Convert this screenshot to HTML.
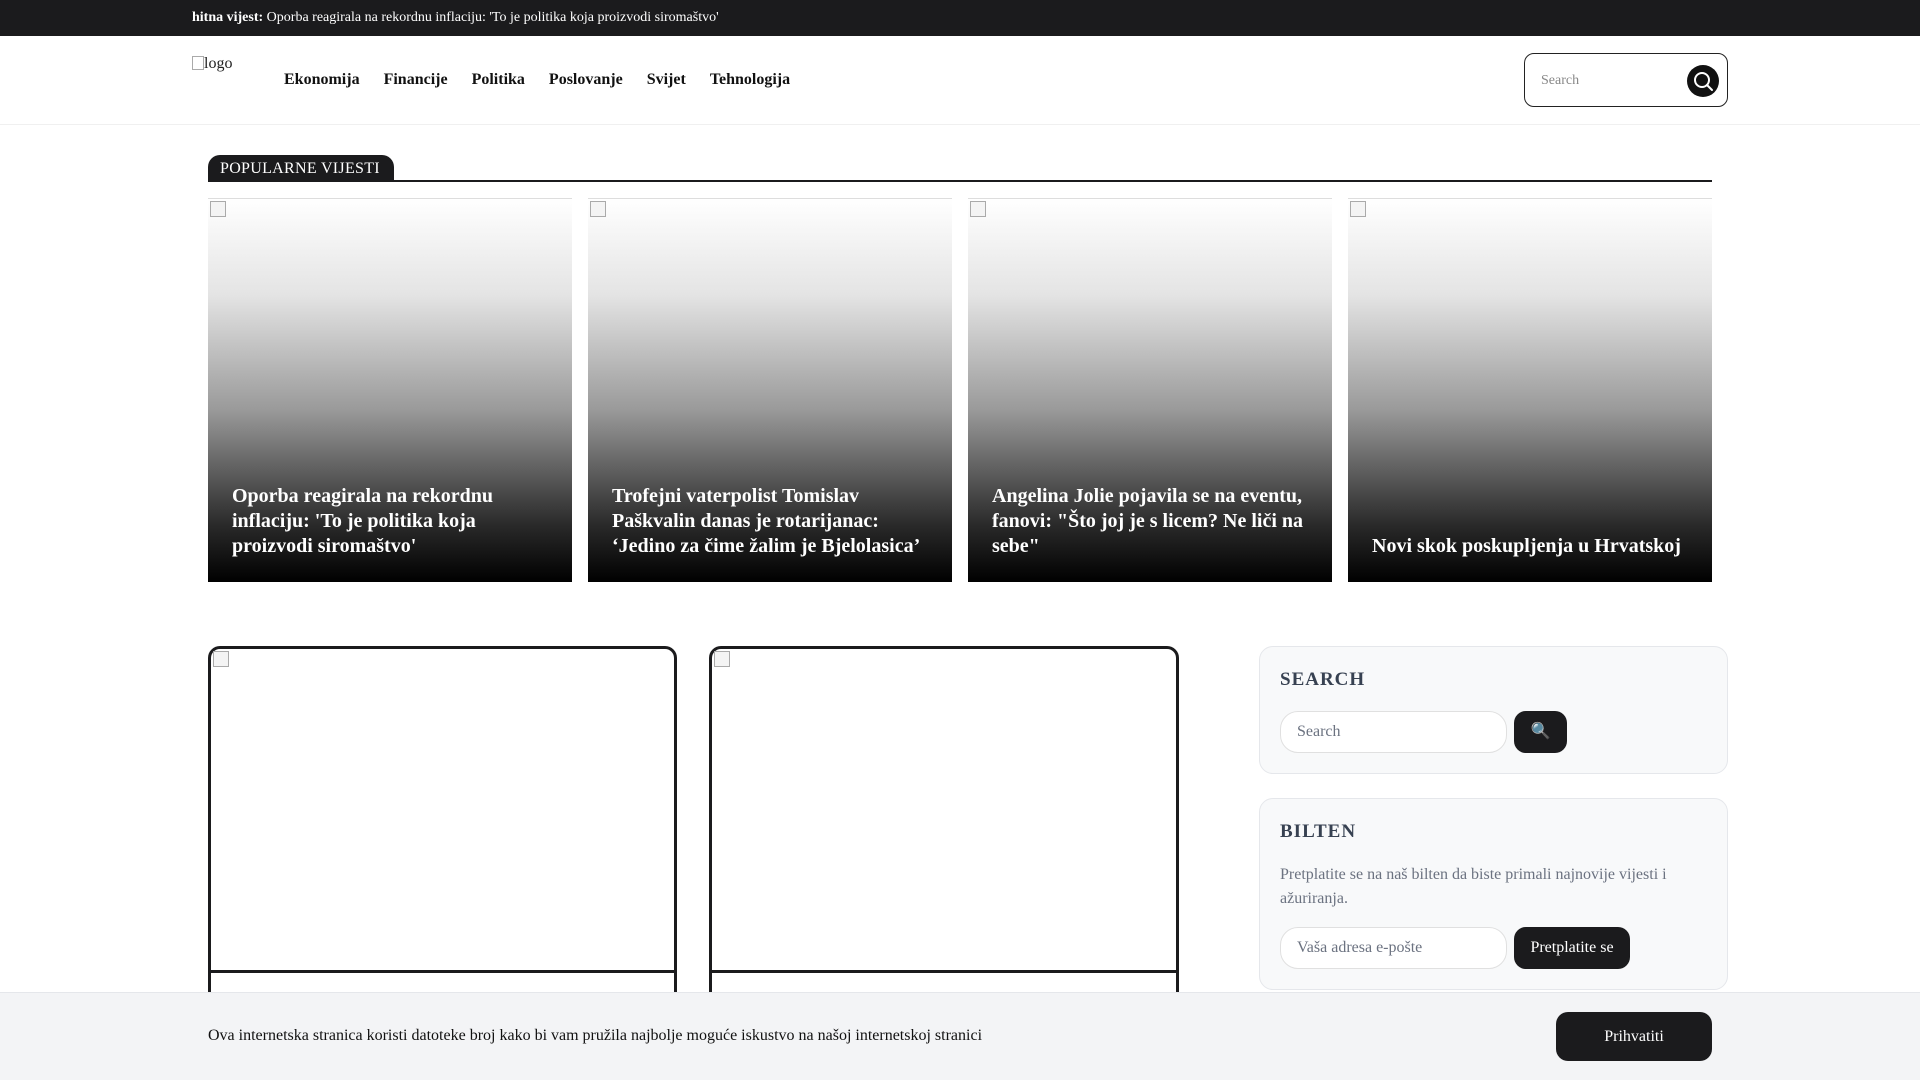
<!DOCTYPE html>
<html style="overflow:hidden;height:1080px"><head><meta charset="utf-8"><style>
*{box-sizing:border-box;margin:0;padding:0}
body{width:1920px;height:1080px;overflow:hidden;font-family:"Liberation Serif",serif;background:#fff;color:#111;position:relative}
.top{height:36px;background:#1b1b1d;color:#fff;font-size:14px;line-height:36px;padding-left:192px}
.hdr{height:89px;border-bottom:1px solid #f0f0f0;position:relative}
.logo{position:absolute;left:192px;top:19px;font-size:16px;color:#222}
.nav{position:absolute;left:284px;font-size:16px;font-weight:bold;display:flex;gap:24px;top:35px}
.sb{position:absolute;left:1524px;top:17px;width:204px;height:54px;border:1px solid #222;border-radius:10px;font-size:14px;color:#888;padding:19px 16px}
.sb .ic{position:absolute;right:8px;top:11px;width:32px;height:32px;border-radius:50%;background:#111}
.tab{position:absolute;left:208px;top:155px;width:186px;height:26px;background:#1b1b1d;color:#fff;font-size:16px;line-height:27px;padding-left:12px;border-radius:12px 12px 0 0;letter-spacing:.3px}
.line{position:absolute;left:208px;top:180px;width:1504px;height:2px;background:#1b1b1d}
.card{position:absolute;top:198px;width:364px;height:384px;background:linear-gradient(to bottom,#fff 0%,#e4e4e4 25%,#9a9a9a 55%,#2a2a2a 85%,#000 100%);border-top:1px solid #ddd}
.card h3{position:absolute;left:24px;right:20px;bottom:23px;color:#fff;font-size:20px;line-height:25px;font-weight:bold}
.bi{position:absolute;left:2px;top:2px;width:16px;height:16px;border:1px solid #aaa;background:#f4f4f4}
.post{position:absolute;top:646px;height:460px;border:3px solid #1b1b1d;border-radius:12px}
.post .dv{position:absolute;left:0;right:0;top:321px;height:3px;background:#1b1b1d}
.w{position:absolute;left:1259px;width:469px;background:#f8f9fa;border:1px solid #e5e7eb;border-radius:14px}
.w h4{position:absolute;left:20px;font-size:19px;font-weight:bold;color:#374151;letter-spacing:1px}
.in{position:absolute;left:20px;width:227px;height:42px;background:#fff;border:1px solid #e0e0e0;border-radius:18px;font-size:16px;color:#6b7280;padding:11px 16px}
.bt{position:absolute;left:254px;height:42px;background:#1b1b1d;border-radius:12px;color:#fff;font-size:16px;line-height:42px;text-align:center}
.ck{position:absolute;left:0;top:992px;width:1920px;height:88px;background:#f3f4f6;border-top:1px solid #e5e7eb}
</style></head><body>
<div class="top"><b>hitna vijest:</b> Oporba reagirala na rekordnu inflaciju: 'To je politika koja proizvodi siromaštvo'</div>
<div class="hdr">
<div class="logo"><span style="display:inline-block;width:12px;height:14px;border:1px solid #aaa;vertical-align:-2px"></span>logo</div>
<div class="nav"><span>Ekonomija</span><span>Financije</span><span>Politika</span><span>Poslovanje</span><span>Svijet</span><span>Tehnologija</span></div>
<div class="sb">Search<div class="ic"><svg width="32" height="32" viewBox="0 0 32 32"><circle cx="15" cy="15" r="7" fill="none" stroke="#fff" stroke-width="2"/><path d="M20 20l5 5" stroke="#fff" stroke-width="2" stroke-linecap="round"/></svg></div></div>
</div>
<div class="tab">POPULARNE VIJESTI</div><div class="line"></div>
<div class="card" style="left:208px"><div class="bi"></div><h3>Oporba reagirala na rekordnu inflaciju: 'To je politika koja proizvodi siromaštvo'</h3></div>
<div class="card" style="left:588px"><div class="bi"></div><h3>Trofejni vaterpolist Tomislav Paškvalin danas je rotarijanac: ‘Jedino za čime žalim je Bjelolasica’</h3></div>
<div class="card" style="left:968px"><div class="bi"></div><h3>Angelina Jolie pojavila se na eventu, fanovi: "Što joj je s licem? Ne liči na sebe"</h3></div>
<div class="card" style="left:1348px"><div class="bi"></div><h3>Novi skok poskupljenja u Hrvatskoj</h3></div>
<div style="position:absolute;left:0;top:0;width:1920px;height:1080px;overflow:hidden;pointer-events:none">
<div class="post" style="left:208px;width:469px"><div class="bi"></div><div class="dv"></div></div>
<div class="post" style="left:709px;width:470px"><div class="bi"></div><div class="dv"></div></div>
</div>
<div class="w" style="top:646px;height:128px"><h4 style="top:22px">SEARCH</h4><div class="in" style="top:64px">Search</div><div class="bt" style="top:64px;width:53px">🔍</div></div>
<div class="w" style="top:798px;height:192px"><h4 style="top:22px">BILTEN</h4>
<div style="position:absolute;left:20px;top:64px;width:420px;font-size:16px;line-height:24px;color:#6b7280">Pretplatite se na naš bilten da biste primali najnovije vijesti i ažuriranja.</div>
<div class="in" style="top:128px">Vaša adresa e-pošte</div><div class="bt" style="top:128px;width:116px">Pretplatite se</div></div>
<div class="ck"><div style="position:absolute;left:208px;top:34px;font-size:16px">Ova internetska stranica koristi datoteke broj kako bi vam pružila najbolje moguće iskustvo na našoj internetskoj stranici</div>
<div style="position:absolute;left:1556px;top:19px;width:156px;height:49px;background:#1b1b1d;border-radius:12px;color:#fff;font-size:16px;line-height:49px;text-align:center">Prihvatiti</div></div>
</body></html>
